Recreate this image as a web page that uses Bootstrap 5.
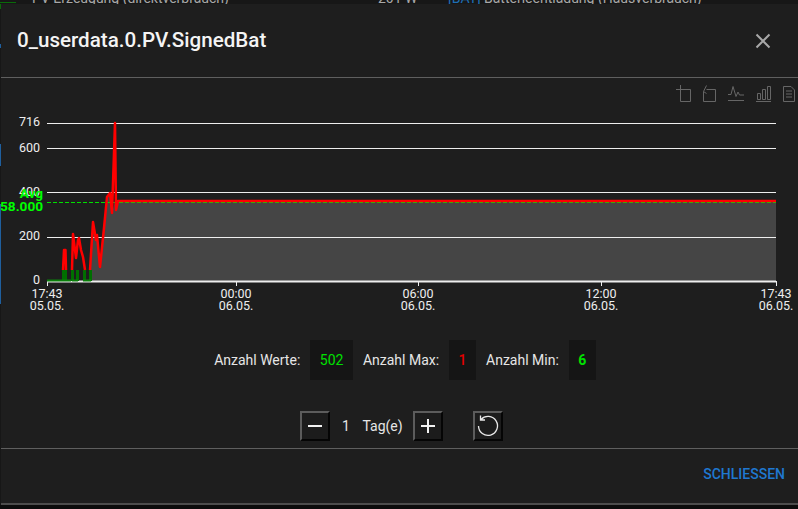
<!DOCTYPE html>
<html lang="de">
<head>
<meta charset="utf-8">
<title>0_userdata.0.PV.SignedBat</title>
<link href="https://cdn.jsdelivr.net/npm/bootstrap@5.3.0/dist/css/bootstrap.min.css" rel="stylesheet">
<style>
html,body{height:509px;overflow:hidden;}
body{background:#0c0c0c;font-family:Roboto,"Liberation Sans",sans-serif;color:#e6e6e6;font-size:14px;}
.page-wrap{width:798px;height:509px;overflow:hidden;}
.behind-strip{height:4px;flex:none;overflow:hidden;background:#171717;color:#a8a8a8;font-size:14px;line-height:20px;}
.behind-strip span{display:block;margin-top:-12px;white-space:nowrap;}
.behind-strip .bs-green{width:16px;height:1px;margin:2px 16px 0 0;background:#0a6b0a;flex:none;}
.bs-a{width:346px;}
.bs-b{width:70px;}
.bs-c{width:36px;color:#1f6fb5;}
.edge-col{width:1px;flex:none;background:linear-gradient(#0a6b0a 0 5px,#171717 5px 40px,#1f5f9e 40px 44px,#171717 44px 140px,#1f5f9e 140px 162px,#171717 162px 200px,#1f5f9e 200px 300px,#171717 300px);}
.shell{width:797px;height:501px;flex:none;background:#1e1e1e;border:0;border-radius:0;border-bottom:2px solid #4d4d4d;color:#e6e6e6;}
.shell .modal-header{height:74px;padding:0 16px;border-bottom:1px solid #5f5f5f;border-radius:0;flex:none;}
.dlg-title{font-size:20.6px;font-weight:500;line-height:24px;color:#f4f4f4;margin:-1px 0 0 0;}
.x-btn{background:none;border:0;padding:0;width:20px;height:20px;margin-right:9px;line-height:0;}
.shell .modal-body{padding:0;height:370px;flex:none;}
.tools{height:28px;padding:7px 3px 0 0;gap:12px;}
.tools svg{display:block;}
.plot{display:block;width:797px;height:214px;}
.ax{font-family:Roboto,"Liberation Sans",sans-serif;font-size:12.5px;fill:#eee;}
.ax-mid{text-anchor:middle;}
.ax-end{text-anchor:end;}
.ax-green{font-family:Roboto,"Liberation Sans",sans-serif;font-size:13.6px;font-weight:700;fill:#00ff00;text-anchor:end;}
.stats{margin-top:20px;height:40px;padding-left:11px;}
.stat-lab{margin-right:10px;white-space:nowrap;font-size:14px;}
.stat-box{background:#151515;height:40px;padding:0 9.5px;margin-right:10px;font-size:14px;}
.stat-box:last-child{margin-right:0;}
.c-ok{color:#00e000;}
.c-max{color:#e00000;font-weight:500;}
.c-min{color:#00e000;font-weight:700;}
.days{margin-top:31px;padding-left:3px;height:30px;}
.sq-btn{width:30px;height:30px;padding:0;background:#1c1c1c;border:2px solid;border-color:#5c5c5c #050505 #050505 #5c5c5c;border-radius:0;line-height:0;}
.day-num{width:33px;text-align:center;}
.day-lab{width:50px;}
.day-gap{width:30px;}
.shell .modal-footer{height:55px;padding:0 13px 0 0;border-top:1px solid #5f5f5f;border-radius:0;flex:none;}
.close-lnk{font-size:14px;font-weight:500;color:#1f78d1;text-transform:uppercase;text-decoration:none;padding:0;border:0;background:none;margin:-3px 0 0 0;}
</style>
</head>
<body>
<div class="page-wrap d-flex flex-column">
  <div class="behind-strip d-flex">
    <span class="bs-green"></span>
    <span class="bs-a">PV-Erzeugung (direktverbrauch)</span>
    <span class="bs-b">201 W</span>
    <span class="bs-c">[BAT]</span>
    <span>Batterieentladung (Hausverbrauch)</span>
  </div>
  <div class="d-flex">
    <div class="edge-col"></div>
    <div class="modal-content shell d-flex flex-column">
      <div class="modal-header d-flex justify-content-between align-items-center">
        <h5 class="dlg-title">0_userdata.0.PV.SignedBat</h5>
        <button class="x-btn" type="button" aria-label="Schließen">
          <svg width="20" height="20" viewBox="0 0 20 20"><path d="M3.5 3.5 16.5 16.5M16.5 3.5 3.5 16.5" stroke="#a8a8a8" stroke-width="2" fill="none"/></svg>
        </button>
      </div>
      <div class="modal-body d-flex flex-column">
        <div class="tools d-flex justify-content-end">
          <svg width="15" height="17" viewBox="0 0 15 17" fill="none" stroke="#666" stroke-width="1"><path d="M0 4.500H14.500V16.500H4.500V0"/></svg>
          <svg width="13" height="17" viewBox="0 0 13 17" fill="none" stroke="#666" stroke-width="1"><path d="M3.500 4.500H12.500V16.500H.5V6.500M.5 6.500 3.500 .5M3.500 8.500.5 6.500"/></svg>
          <svg width="16" height="17" viewBox="0 0 16 17" fill="none" stroke="#666" stroke-width="1"><path d="M0 9.500H3L5 1.500 8 11.500 10 7 11.500 10H16M0 15.500H16"/></svg>
          <svg width="15" height="17" viewBox="0 0 15 17" fill="none" stroke="#666" stroke-width="1"><path d="M1.500 8.500H4.500V14.500H1.500ZM6.500 4.500H9.500V14.500H6.500ZM11.500 1.500H14.500V14.500H11.500ZM0 16.500H15"/></svg>
          <svg width="12" height="17" viewBox="0 0 12 17" fill="none" stroke="#666" stroke-width="1"><path d="M.5 1.500H8L11.500 5V16.500H.5ZM3 6H9M3 9H9M3 12H9"/></svg>
        </div>
        <svg class="plot" viewBox="1 106 797 214" role="img" aria-label="Diagramm">
          <polygon fill="#454545" points="90,281 93,222 96,240 97,235 100,267 104,228 107,197 110,193 112,213 115,201 776,201 776,281"/>
          <g stroke="#eeeeee" stroke-width="1">
            <path d="M47 123.500H776M47 148.500H776M47 192.500H776M47 237.500H776"/>
            <path d="M47 281.500H776" stroke-width="2"/>
            <path d="M47.500 281V286M236.500 281V286M418.500 281V286M601.500 281V286M776.500 281V286"/>
          </g>
          <path d="M47 202.500H776" stroke="#00e000" stroke-width="1" stroke-dasharray="4 2"/>
          <g fill="#006f00">
            <rect x="62" y="270" width="5" height="11"/>
            <rect x="71" y="270" width="3" height="11"/>
            <rect x="76" y="270" width="3" height="11"/>
            <rect x="83" y="270" width="3" height="11"/>
            <rect x="89" y="270" width="3" height="11"/>
          </g>
          <path d="M47 280.500H71M72 280.500H78M83 280.500H91" stroke="#0a800a" stroke-width="2" fill="none"/>
          <path d="M63 270 64 250H65.500L66 270M72 270 73 234 75 250 76 258 78 240 79 238 81 250 83 257 85 270M90 270 93 222 96 240 97 235 100 267 104 228 107 197 110 193 112 213 115 123 116 210 118 201 776 201" stroke="#ff0000" stroke-width="2.500" fill="none" stroke-linejoin="round"/>
          <g class="ax ax-end">
            <text x="40" y="126">716</text>
            <text x="40" y="152">600</text>
            <text x="40" y="196">400</text>
            <text x="40" y="240">200</text>
            <text x="40" y="284">0</text>
          </g>
          <text class="ax-green" x="43" y="198">Avg</text>
          <text class="ax-green" x="43" y="211">358.000</text>
          <g class="ax ax-mid">
            <text x="47" y="298">17:43</text><text x="47" y="310">05.05.</text>
            <text x="236" y="298">00:00</text><text x="236" y="310">06.05.</text>
            <text x="418" y="298">06:00</text><text x="418" y="310">06.05.</text>
            <text x="601" y="298">12:00</text><text x="601" y="310">06.05.</text>
            <text x="776" y="298">17:43</text><text x="776" y="310">06.05.</text>
          </g>
        </svg>
        <div class="stats d-flex justify-content-center align-items-center">
          <span class="stat-lab">Anzahl Werte:</span><span class="stat-box c-ok d-flex align-items-center">502</span>
          <span class="stat-lab">Anzahl Max:</span><span class="stat-box c-max d-flex align-items-center">1</span>
          <span class="stat-lab">Anzahl Min:</span><span class="stat-box c-min d-flex align-items-center">6</span>
        </div>
        <div class="days d-flex justify-content-center align-items-center">
          <button class="btn sq-btn" type="button" aria-label="Weniger"><svg width="26" height="26" viewBox="0 0 26 26"><path d="M6 13H20" stroke="#f2f2f2" stroke-width="2"/></svg></button>
          <span class="day-num">1</span>
          <span class="day-lab">Tag(e)</span>
          <button class="btn sq-btn" type="button" aria-label="Mehr"><svg width="26" height="26" viewBox="0 0 26 26"><path d="M6 13H20M13 6V20" stroke="#f2f2f2" stroke-width="2"/></svg></button>
          <span class="day-gap"></span>
          <button class="btn sq-btn" type="button" aria-label="Zurücksetzen"><svg width="26" height="26" viewBox="0 0 26 26" fill="none" stroke="#e8e8e8" stroke-width="1.300"><path d="M6 6.500A9.500 9.500 0 1 1 3.500 13M5.500 2.500V7H10"/></svg></button>
        </div>
      </div>
      <div class="modal-footer d-flex justify-content-end align-items-center">
        <button class="close-lnk" type="button">Schließen</button>
      </div>
    </div>
  </div>
</div>
<script src="https://cdn.jsdelivr.net/npm/bootstrap@5.3.0/dist/js/bootstrap.bundle.min.js"></script>
</body>
</html>
